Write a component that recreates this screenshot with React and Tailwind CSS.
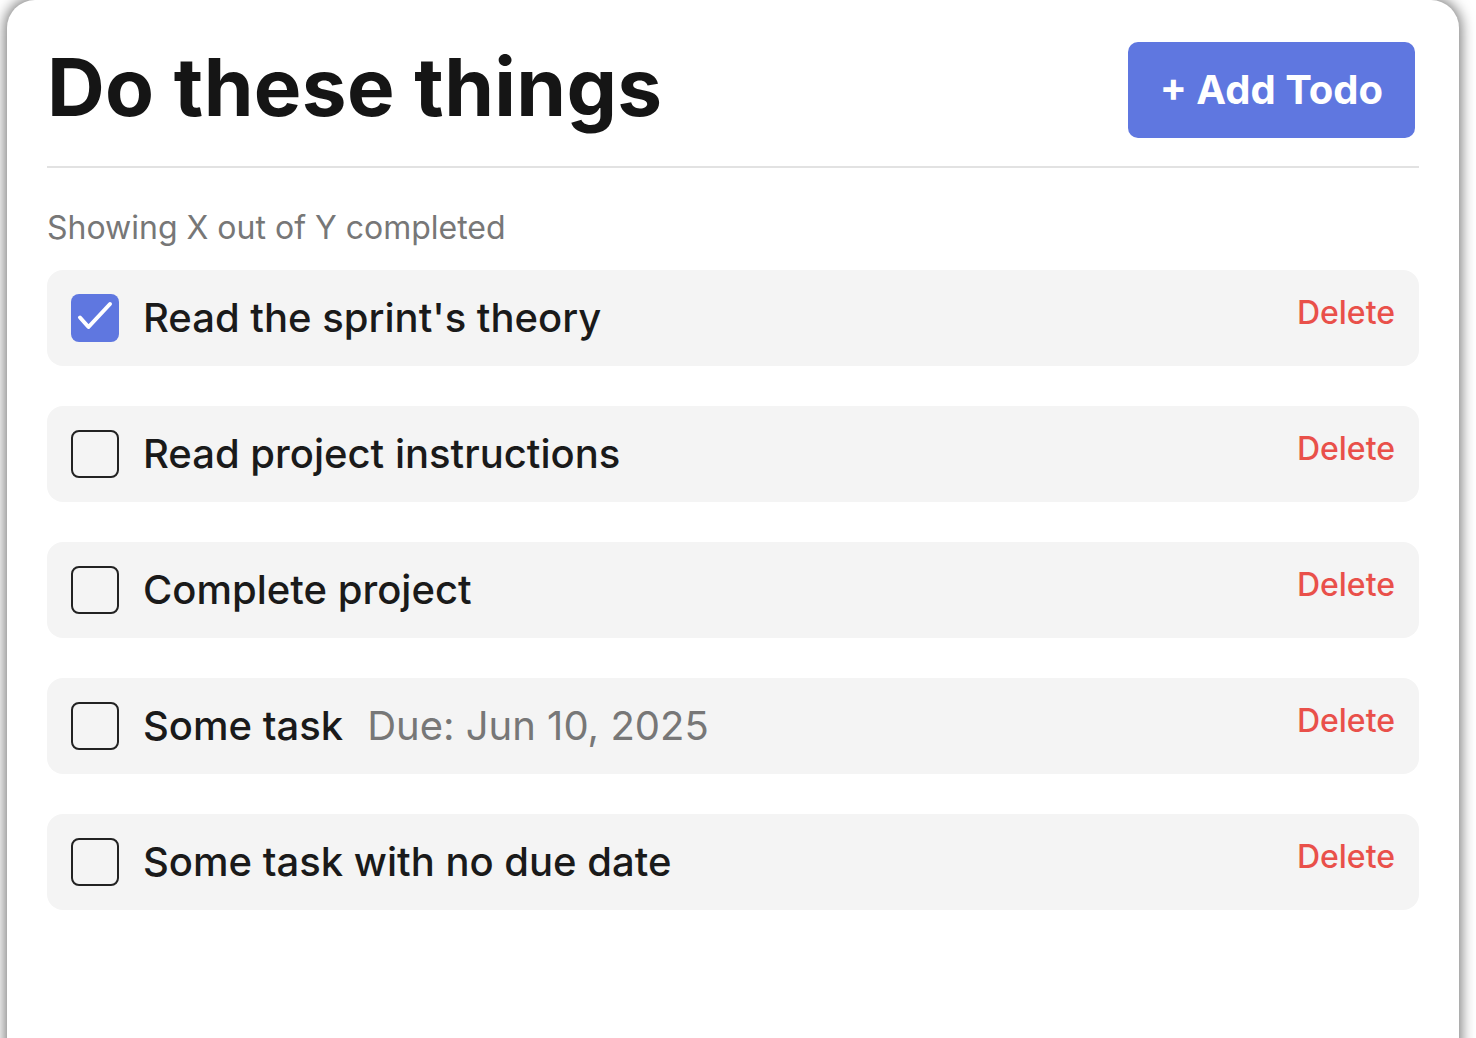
import React, { useState } from 'react';

const initialTodos = [
  { id: 1, title: "Read the sprint's theory", done: true },
  { id: 2, title: 'Read project instructions', done: false },
  { id: 3, title: 'Complete project', done: false },
  { id: 4, title: 'Some task', due: 'Jun 10, 2025', done: false },
  { id: 5, title: 'Some task with no due date', done: false },
];

const Checkbox = ({ checked, onChange }) => (
  <button
    onClick={() => onChange(!checked)}
    className={`flex h-12 w-12 shrink-0 items-center justify-center rounded-lg ${
      checked ? 'bg-[#5f77e0]' : 'border-2 border-[#222] bg-transparent'
    }`}
  >
    {checked && (
      <svg width="48" height="48" viewBox="0 0 48 48" fill="none" stroke="white" strokeWidth="4" strokeLinecap="round" strokeLinejoin="round">
        <path d="M9 23.5l8.5 9.5L39 10" />
      </svg>
    )}
  </button>
);

const App = () => {
  const [todos, setTodos] = useState(initialTodos);

  const toggle = (id, value) =>
    setTodos((list) => list.map((t) => (t.id === id ? { ...t, done: value } : t)));

  const remove = (id) => setTodos((list) => list.filter((t) => t.id !== id));

  return (
    <div className="h-[1038px] overflow-hidden bg-white pl-[7px] pr-[17px] font-['Inter',sans-serif]">
      <div className="min-h-[1100px] rounded-t-[28px] bg-white px-10 shadow-[0_0_14px_2px_rgba(0,0,0,0.55)]">
        {/* Header */}
        <div className="flex items-center justify-between border-b-2 border-[#e2e2e2] pt-[42px] pb-[28px]">
          <h1 className="mb-[6px] text-[80px] font-bold leading-none tracking-[0.35px] text-[#151515]">Do these things</h1>
          <button className="mr-1 h-24 rounded-[10px] bg-[#5f77e0] px-8 text-[40px] font-bold text-white">
            + Add Todo
          </button>
        </div>

        <p className="mt-[36px] text-[32px] leading-[48px] text-[#777]">Showing X out of Y completed</p>

        {/* Todos */}
        <div className="mt-[18px] flex flex-col gap-10">
          {todos.map((todo) => (
            <div key={todo.id} className="flex items-start justify-between rounded-2xl bg-[#f4f4f4] p-6">
              <div className="flex items-center gap-6">
                <Checkbox checked={todo.done} onChange={(v) => toggle(todo.id, v)} />
                <span className="text-[40px] font-medium leading-[48px] text-[#1a1a1a]">{todo.title}</span>
                {todo.due && (
                  <span className="text-[40px] leading-[48px] text-[#777]">Due: {todo.due}</span>
                )}
              </div>
              <button
                onClick={() => remove(todo.id)}
                className="text-[32px] font-medium leading-[38px] text-[#e9504a]"
              >
                Delete
              </button>
            </div>
          ))}
        </div>
      </div>
    </div>
  );
};

export default App;
